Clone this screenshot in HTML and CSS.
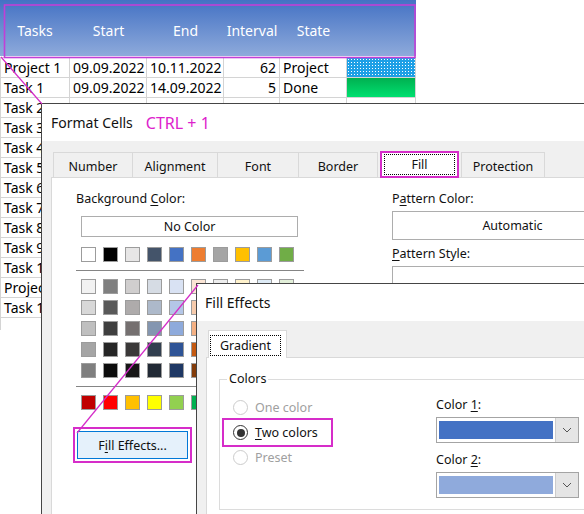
FILE: index.html
```html
<!DOCTYPE html>
<html lang="en">
<head>
    <meta charset="UTF-8">
    <meta name="viewport" content="width=device-width, initial-scale=1.0">
    <title>Format Cells - Fill Effects</title>
    <link rel="stylesheet" href="styles.css">
</head>
<body>
    <div class="sheet">
        <div class="sheet-head">
            <span>Tasks</span><span>Start</span><span>End</span><span>Interval</span><span>State</span><span></span>
        </div>
        <div class="rows">
            <div class="row">
                <span class="cell">Project 1</span><span class="cell">09.09.2022</span><span class="cell">10.11.2022</span><span class="cell num">62</span><span class="cell">Project</span><span class="cell dots"></span>
            </div>
            <div class="row">
                <span class="cell">Task 1</span><span class="cell">09.09.2022</span><span class="cell">14.09.2022</span><span class="cell num">5</span><span class="cell">Done</span><span class="cell green"></span>
            </div>
            <div class="row"><span class="cell">Task 2</span><span class="cell"></span><span class="cell"></span><span class="cell"></span><span class="cell"></span><span class="cell"></span></div>
            <div class="row"><span class="cell">Task 3</span><span class="cell"></span><span class="cell"></span><span class="cell"></span><span class="cell"></span><span class="cell"></span></div>
            <div class="row"><span class="cell">Task 4</span><span class="cell"></span><span class="cell"></span><span class="cell"></span><span class="cell"></span><span class="cell"></span></div>
            <div class="row"><span class="cell">Task 5</span><span class="cell"></span><span class="cell"></span><span class="cell"></span><span class="cell"></span><span class="cell"></span></div>
            <div class="row"><span class="cell">Task 6</span><span class="cell"></span><span class="cell"></span><span class="cell"></span><span class="cell"></span><span class="cell"></span></div>
            <div class="row"><span class="cell">Task 7</span><span class="cell"></span><span class="cell"></span><span class="cell"></span><span class="cell"></span><span class="cell"></span></div>
            <div class="row"><span class="cell">Task 8</span><span class="cell"></span><span class="cell"></span><span class="cell"></span><span class="cell"></span><span class="cell"></span></div>
            <div class="row"><span class="cell">Task 9</span><span class="cell"></span><span class="cell"></span><span class="cell"></span><span class="cell"></span><span class="cell"></span></div>
            <div class="row"><span class="cell">Task 10</span><span class="cell"></span><span class="cell"></span><span class="cell"></span><span class="cell"></span><span class="cell"></span></div>
            <div class="row"><span class="cell">Project 2</span><span class="cell"></span><span class="cell"></span><span class="cell"></span><span class="cell"></span><span class="cell"></span></div>
            <div class="row"><span class="cell">Task 11</span><span class="cell"></span><span class="cell"></span><span class="cell"></span><span class="cell"></span><span class="cell"></span></div>
            <div class="row stub"></div>
        </div>
    </div>

    <div class="dialog format-cells">
        <div class="dialog-title">Format Cells <span class="shortcut">CTRL + 1</span></div>
        <div class="dialog-body">
            <div class="tabs">
                <span class="tab w-number">Number</span>
                <span class="tab w-align">Alignment</span>
                <span class="tab w-font">Font</span>
                <span class="tab w-border">Border</span>
                <span class="tab active w-fill"><span class="focus">Fill</span></span>
                <span class="tab w-protect">Protection</span>
            </div>
            <div class="tab-panel">
                <div class="bg-col">
                    <div class="label">Background <u>C</u>olor:</div>
                    <div class="no-color">No Color</div>
                    <div class="swatch-row">
                        <span class="sw" style="background:#ffffff"></span>
                        <span class="sw" style="background:#000000"></span>
                        <span class="sw" style="background:#e7e6e6"></span>
                        <span class="sw" style="background:#44546a"></span>
                        <span class="sw" style="background:#4472c4"></span>
                        <span class="sw" style="background:#ed7d31"></span>
                        <span class="sw" style="background:#a5a5a5"></span>
                        <span class="sw" style="background:#ffc000"></span>
                        <span class="sw" style="background:#5b9bd5"></span>
                        <span class="sw" style="background:#70ad47"></span>
                    </div>
                    <div class="sep"></div>
                    <div class="tints">
                        <span class="sw" style="background:#f2f2f2"></span>
                        <span class="sw" style="background:#7f7f7f"></span>
                        <span class="sw" style="background:#d0cece"></span>
                        <span class="sw" style="background:#d6dce4"></span>
                        <span class="sw" style="background:#d9e2f3"></span>
                        <span class="sw" style="background:#fbe5d5"></span>
                        <span class="sw" style="background:#ededed"></span>
                        <span class="sw" style="background:#fff2cc"></span>
                        <span class="sw" style="background:#deebf6"></span>
                        <span class="sw" style="background:#e2efd9"></span>

                        <span class="sw" style="background:#d8d8d8"></span>
                        <span class="sw" style="background:#595959"></span>
                        <span class="sw" style="background:#aeabab"></span>
                        <span class="sw" style="background:#adb9ca"></span>
                        <span class="sw" style="background:#b4c6e7"></span>
                        <span class="sw" style="background:#f7cbac"></span>
                        <span class="sw" style="background:#dbdbdb"></span>
                        <span class="sw" style="background:#fee599"></span>
                        <span class="sw" style="background:#bdd7ee"></span>
                        <span class="sw" style="background:#c5e0b3"></span>

                        <span class="sw" style="background:#bfbfbf"></span>
                        <span class="sw" style="background:#3f3f3f"></span>
                        <span class="sw" style="background:#757070"></span>
                        <span class="sw" style="background:#8496b0"></span>
                        <span class="sw" style="background:#8eaadb"></span>
                        <span class="sw" style="background:#f4b083"></span>
                        <span class="sw" style="background:#c9c9c9"></span>
                        <span class="sw" style="background:#ffd965"></span>
                        <span class="sw" style="background:#9cc3e5"></span>
                        <span class="sw" style="background:#a8d08d"></span>

                        <span class="sw" style="background:#a5a5a5"></span>
                        <span class="sw" style="background:#262626"></span>
                        <span class="sw" style="background:#3a3838"></span>
                        <span class="sw" style="background:#323f4f"></span>
                        <span class="sw" style="background:#2f5496"></span>
                        <span class="sw" style="background:#c45911"></span>
                        <span class="sw" style="background:#7b7b7b"></span>
                        <span class="sw" style="background:#bf9000"></span>
                        <span class="sw" style="background:#2e75b5"></span>
                        <span class="sw" style="background:#538135"></span>

                        <span class="sw" style="background:#7f7f7f"></span>
                        <span class="sw" style="background:#0c0c0c"></span>
                        <span class="sw" style="background:#171616"></span>
                        <span class="sw" style="background:#222a35"></span>
                        <span class="sw" style="background:#1f3864"></span>
                        <span class="sw" style="background:#833c0b"></span>
                        <span class="sw" style="background:#525252"></span>
                        <span class="sw" style="background:#7f6000"></span>
                        <span class="sw" style="background:#1e4e79"></span>
                        <span class="sw" style="background:#375623"></span>
                    </div>
                    <div class="sep"></div>
                    <div class="swatch-row">
                        <span class="sw" style="background:#c00000"></span>
                        <span class="sw" style="background:#ff0000"></span>
                        <span class="sw" style="background:#ffc000"></span>
                        <span class="sw" style="background:#ffff00"></span>
                        <span class="sw" style="background:#92d050"></span>
                        <span class="sw" style="background:#00b050"></span>
                        <span class="sw" style="background:#00b0f0"></span>
                        <span class="sw" style="background:#0070c0"></span>
                        <span class="sw" style="background:#002060"></span>
                        <span class="sw" style="background:#7030a0"></span>
                    </div>
                    <div class="fill-btn">F<u>i</u>ll Effects...</div>
                </div>
                <div class="pattern-col">
                    <div class="label">P<u>a</u>ttern Color:</div>
                    <div class="combo">Automatic</div>
                    <div class="label label-gap"><u>P</u>attern Style:</div>
                    <div class="combo"></div>
                </div>
            </div>
        </div>
    </div>

    <div class="dialog fill-effects">
        <div class="dialog-title">Fill Effects</div>
        <div class="dialog-body">
            <div class="tabs">
                <span class="tab active w-gradient"><span class="focus">Gradient</span></span>
            </div>
            <div class="fx-panel">
                <fieldset class="colors">
                    <legend>Colors</legend>
                    <div class="fx-cols">
                        <div class="fx-left">
                            <div class="radio off"><span class="dot"></span>One color</div>
                            <div class="radio on marked"><span class="dot"></span><span><u>T</u>wo colors</span></div>
                            <div class="radio off"><span class="dot"></span>Preset</div>
                        </div>
                        <div class="fx-right">
                            <div class="label first">Color <u>1</u>:</div>
                            <div class="pick">
                                <span class="pick-fill color-one"></span>
                                <span class="pick-arrow"><svg width="10" height="6" viewBox="0 0 10 6"><polyline points="1,1 5,5 9,1" fill="none" stroke="#555" stroke-width="1"/></svg></span>
                            </div>
                            <div class="label label-gap2">Color <u>2</u>:</div>
                            <div class="pick">
                                <span class="pick-fill color-two"></span>
                                <span class="pick-arrow"><svg width="10" height="6" viewBox="0 0 10 6"><polyline points="1,1 5,5 9,1" fill="none" stroke="#555" stroke-width="1"/></svg></span>
                            </div>
                        </div>
                    </div>
                </fieldset>
            </div>
        </div>
    </div>

    <svg class="marks" width="584" height="514" viewBox="0 0 584 514">
        <rect x="4.5" y="5" width="410.5" height="52.5" fill="none" stroke="#c23fd6" stroke-width="1.6"/>
        <line x1="1" y1="57" x2="42" y2="104" stroke="#d42bc8" stroke-width="1.2"/>
        <line x1="77" y1="433" x2="198" y2="285" stroke="#d42bc8" stroke-width="1.2"/>
    </svg>
</body>
</html>
```

FILE: styles.css
```css
* {
    box-sizing: border-box;
}
body {
    font-family: "Noto Sans", "Liberation Sans", sans-serif;
    margin: 0;
    padding: 0;
    width: 584px;
    height: 514px;
    overflow: hidden;
    position: relative;
    background-color: #ffffff;
    color: #000000;
}

/* spreadsheet behind the dialogs */
.sheet {
    width: 416px;
}
.sheet-head {
    display: grid;
    grid-template-columns: 70px 77px 77px 56px 67px 69px;
    height: 56px;
    margin-bottom: 1px;
    padding-top: 4px;
    align-items: center;
    text-align: center;
    font-size: 14px;
    color: #ffffff;
    background: linear-gradient(#4472c4, #8eaadb);
}
.rows {
    border-top: 1px solid #d4d4d4;
}
.row {
    display: grid;
    grid-template-columns: 69px 77px 77px 56px 67px 69px;
    height: 20px;
    border-left: 1px solid #d4d4d4;
}
.row.stub {
    height: 12px;
}
.cell {
    border-right: 1px solid #d4d4d4;
    border-bottom: 1px solid #d4d4d4;
    padding: 0 3px;
    font-size: 14px;
    line-height: 20px;
    white-space: nowrap;
    overflow: hidden;
}
.cell.num {
    text-align: right;
}
.cell.dots {
    background-color: #1ea0e6;
    background-image: radial-gradient(#ffffff 0.7px, transparent 1px);
    background-size: 3px 3px;
}
.cell.green {
    background: linear-gradient(#00b050, #00e070);
}

/* dialogs, cut off by the right and bottom edge of the shot */
.dialog {
    position: absolute;
    display: flex;
    flex-direction: column;
    border: 1px solid #454545;
    border-right: none;
    border-bottom: none;
    background-color: #f0f0f0;
    font-size: 12.5px;
    color: #111111;
}
.format-cells {
    left: 41px;
    top: 103px;
    width: 543px;
    height: 411px;
}
.fill-effects {
    left: 196px;
    top: 283px;
    width: 388px;
    height: 231px;
}
.dialog-title {
    height: 37px;
    flex: none;
    display: flex;
    align-items: center;
    padding-left: 9px;
    font-size: 14px;
    background-color: #ffffff;
}
.fill-effects .dialog-title {
    padding-left: 8px;
}
.shortcut {
    margin-left: 13px;
    font-size: 16px;
    color: #dd22cc;
}
.dialog-body {
    flex: 1;
    display: flex;
    flex-direction: column;
    padding: 11px 0 0 9px;
}
.fill-effects .dialog-body {
    padding-top: 9px;
}
u {
    text-underline-offset: 2px;
}

.tabs {
    display: flex;
    align-items: flex-end;
    height: 25px;
    flex: none;
    padding-left: 2px;
}
.fill-effects .tabs {
    height: 27px;
}
.tab {
    height: 25px;
    margin-right: -1px;
    padding-top: 2px;
    display: flex;
    align-items: center;
    justify-content: center;
    border: 1px solid #d9d9d9;
    border-bottom: none;
    background-color: #f0f0f0;
}
.tab.active {
    position: relative;
    z-index: 1;
    height: 27px;
    margin: 0 2px -1px 3px;
    padding: 2px 3px 3px;
    background-color: #ffffff;
    outline: 2px solid #d62dc9;
    outline-offset: -2px;
}
.fill-effects .tab.active {
    height: 28px;
    margin: 0 0 -1px 0;
    padding: 4px 5px 2px 1px;
    outline: none;
}
.focus {
    flex: 1;
    align-self: stretch;
    display: flex;
    align-items: center;
    justify-content: center;
    border: 1px dotted #000000;
}
.w-number { width: 80px; }
.w-align { width: 86px; }
.w-font { width: 82px; }
.w-border { width: 80px; }
.w-fill { width: 79px; }
.w-protect { width: 84px; }
.w-gradient { width: 79px; }

.tab-panel {
    flex: 1;
    display: flex;
    padding: 13px 0 0 24px;
    border: 1px solid #d9d9d9;
    border-right: none;
    border-bottom: none;
    background-color: #ffffff;
}
.label {
    height: 16px;
    line-height: 16px;
    white-space: nowrap;
}
.bg-col {
    width: 228px;
}
.no-color {
    width: 217px;
    height: 21px;
    margin: 9px 0 0 5px;
    border: 1px solid #adadad;
    text-align: center;
    line-height: 19px;
}
.swatch-row {
    display: flex;
    gap: 7px;
    margin: 10px 0 0 5px;
}
.sep + .swatch-row {
    margin-top: 8px;
}
.sw {
    width: 15px;
    height: 15px;
    border: 1px solid #9c9c9c;
}
.sep {
    height: 1px;
    margin-top: 8px;
    background-color: #858585;
}
.tints {
    display: grid;
    grid-template-columns: repeat(10, 15px);
    gap: 6px 7px;
    margin: 8px 0 0 5px;
}
.fill-btn {
    width: 111px;
    height: 28px;
    margin: 21px 0 0 1px;
    border: 1px solid #0078d7;
    background-color: #e5f1fb;
    text-align: center;
    line-height: 27px;
    outline: 2px solid #d62dc9;
    outline-offset: 2px;
}
.pattern-col {
    flex: 1;
    margin-left: 88px;
}
.combo {
    height: 29px;
    margin-top: 4px;
    padding-left: 48px;
    border: 1px solid #adadad;
    border-right: none;
    text-align: center;
    line-height: 27px;
}
.label-gap {
    margin-top: 6px;
}

/* fill effects */
.fx-panel {
    flex: 1;
    padding: 13px 0 0 12px;
    border: 1px solid #d9d9d9;
    border-right: none;
    border-bottom: none;
    background-color: #ffffff;
}
.colors {
    margin: 0;
    padding: 8px 0 11px 4px;
    border: 1px solid #dcdcdc;
    border-right: none;
}
.colors legend {
    margin-left: 3px;
    padding: 0 2px;
    line-height: 16px;
}
.fx-cols {
    display: flex;
}
.fx-left {
    width: 212px;
}
.radio {
    display: flex;
    align-items: center;
    gap: 7px;
    width: 107px;
    height: 25px;
    padding-left: 9px;
}
.radio .dot {
    width: 15px;
    height: 15px;
    display: flex;
    align-items: center;
    justify-content: center;
    border: 1px solid #333333;
    border-radius: 50%;
    background-color: #ffffff;
}
.radio.off {
    color: #a0a0a0;
}
.radio.off .dot {
    border-color: #cccccc;
}
.radio.on .dot::after {
    content: "";
    width: 8px;
    height: 8px;
    border-radius: 50%;
    background-color: #333333;
}
.radio.marked {
    outline: 2px solid #d62dc9;
}
.label.first {
    margin-top: 2px;
}
.label-gap2 {
    margin-top: 9px;
}
.pick {
    display: flex;
    width: 143px;
    height: 26px;
    margin-top: 4px;
    border: 1px solid #a4a4a4;
    background-color: #ffffff;
}
.pick-fill {
    width: 114px;
    height: 18px;
    margin: 3px 2px;
}
.color-one {
    background-color: #4472c4;
}
.color-two {
    background-color: #8faadc;
}
.pick-arrow {
    flex: 1;
    display: flex;
    align-items: center;
    justify-content: center;
    border-left: 1px solid #cccccc;
    background-color: #e5e5e5;
}

.marks {
    position: absolute;
    left: 0;
    top: 0;
    pointer-events: none;
}
```
